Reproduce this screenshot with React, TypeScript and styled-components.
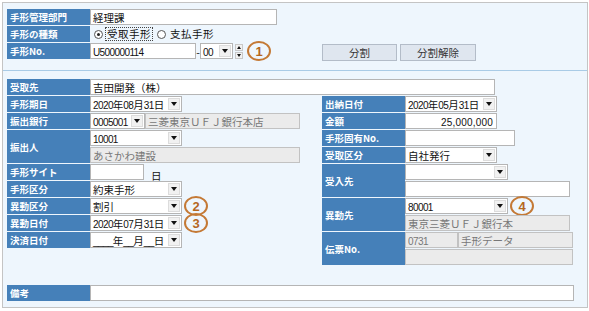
import styled, { createGlobalStyle } from "styled-components";

const GlobalStyle = createGlobalStyle`
    body {
        margin: 0;
        background: #ffffff;
        font-family: "Noto Sans CJK JP", sans-serif;
    }
`;

const Panel = styled.div`
    box-sizing: border-box;
    width: 586px;
    margin: 2px;
    border: 1px solid #c4c4c4;
    background: #eef6fd;
`;

const TopSection = styled.div`
    box-sizing: border-box;
    height: 68px;
    padding: 6px 4px 0;
    border-bottom: 1px solid #a9cbe6;
    display: flex;
`;

const FormBlock = styled.div<{ $w: number }>`
    width: ${(p) => p.$w}px;
    flex: none;
    display: flex;
    flex-direction: column;
    gap: 1px;
`;

const ButtonGroup = styled.div`
    display: flex;
    gap: 3px;
    padding-top: 35px;
`;

const Button = styled.div<{ $w: number }>`
    box-sizing: border-box;
    width: ${(p) => p.$w}px;
    height: 17px;
    border: 1px solid #b3bcc8;
    background: #dfe6ef;
    color: #333;
    font-size: 10.5px;
    display: flex;
    align-items: center;
    justify-content: center;
`;

const LowerSection = styled.div`
    padding: 8px 4px 6px;
    display: flex;
    flex-direction: column;
    gap: 1px;
`;

const Columns = styled.div`
    display: flex;
`;

const Row = styled.div<{ $tall?: boolean; $mt?: number }>`
    display: flex;
    height: ${(p) => (p.$tall ? 33 : 16)}px;
    margin-top: ${(p) => p.$mt ?? 0}px;
`;

const Label = styled.div`
    box-sizing: border-box;
    width: 83px;
    flex: none;
    background: #4580b9;
    color: #ffffff;
    font-weight: bold;
    font-size: 9.5px;
    padding-left: 3px;
    display: flex;
    align-items: center;
    white-space: nowrap;
`;

const Values = styled.div`
    display: flex;
    flex-direction: column;
    gap: 1px;
`;

const Line = styled.div`
    display: flex;
    align-items: center;
    height: 16px;
`;

const TextBox = styled.div<{ $w: number; $ro?: boolean; $right?: boolean }>`
    box-sizing: border-box;
    width: ${(p) => p.$w}px;
    height: 16px;
    flex: none;
    border: 1px solid ${(p) => (p.$ro ? "#c2c2c2" : "#b5b5b5")};
    background: ${(p) => (p.$ro ? "#ebebeb" : "#ffffff")};
    color: ${(p) => (p.$ro ? "#777" : "#111")};
    font-size: 10.5px;
    padding: 0 3px 0 2px;
    display: flex;
    align-items: center;
    justify-content: ${(p) => (p.$right ? "flex-end" : "flex-start")};
    white-space: nowrap;
    overflow: hidden;
`;

const SelectBox = styled.div<{ $w: number }>`
    box-sizing: border-box;
    width: ${(p) => p.$w}px;
    height: 16px;
    flex: none;
    border: 1px solid #b5b5b5;
    background: #ffffff;
    color: #111;
    font-size: 10.5px;
    padding-left: 2px;
    display: flex;
    align-items: center;
    justify-content: space-between;
    white-space: nowrap;
`;

// narrow latin run inside field text (digits are condensed in the original UI font)
const Narrow = styled.span<{ $wide?: boolean }>`
    font-family: "Liberation Sans", sans-serif;
    font-size: 10px;
    letter-spacing: ${(p) => (p.$wide ? "0.2px" : "-0.6px")};
`;

const Arrow = styled.span`
    width: 12px;
    height: 12px;
    margin-right: 1px;
    background: #f1f1f1;
    border: 1px solid #dcdcdc;
    box-sizing: border-box;
    display: flex;
    align-items: center;
    justify-content: center;

    &::after {
        content: "";
        border-top: 4px solid #111;
        border-left: 3px solid transparent;
        border-right: 3px solid transparent;
    }
`;

const Spinner = styled.div`
    display: flex;
    flex-direction: column;
    gap: 1px;
    margin-left: 2px;
`;

const SpinHalf = styled.span<{ $up?: boolean }>`
    box-sizing: border-box;
    width: 8px;
    height: 7px;
    border: 1px solid #c8c8c8;
    background: #f2f2f2;
    display: flex;
    align-items: center;
    justify-content: center;

    &::after {
        content: "";
        border-left: 2.5px solid transparent;
        border-right: 2.5px solid transparent;
        ${(p) => (p.$up ? "border-bottom: 3px solid #111;" : "border-top: 3px solid #111;")}
    }
`;

const Dash = styled.span`
    font-size: 10.5px;
    width: 4px;
    text-align: center;
    color: #111;
`;

const Unit = styled.span`
    font-size: 10.5px;
    margin-left: 7px;
    margin-top: 6px;
    color: #111;
`;

const Badge = styled.span<{ $ml: number }>`
    box-sizing: border-box;
    width: 24px;
    height: 20px;
    flex: none;
    margin-left: ${(p) => p.$ml}px;
    border: 2px solid #c47935;
    border-radius: 50%;
    color: #b5671f;
    font-family: "Liberation Sans", sans-serif;
    font-weight: bold;
    font-size: 13px;
    display: flex;
    align-items: center;
    justify-content: center;
`;

const RadioGroup = styled.div`
    display: flex;
    align-items: center;
    padding-left: 4px;
    font-size: 10.5px;
    color: #111;
`;

const RadioDot = styled.span<{ $on?: boolean }>`
    box-sizing: border-box;
    width: 9px;
    height: 9px;
    border: 1px solid #555;
    border-radius: 50%;
    background: #fff;
    display: flex;
    align-items: center;
    justify-content: center;
    margin-right: 2px;

    &::after {
        content: "";
        width: 3px;
        height: 3px;
        border-radius: 50%;
        background: ${(p) => (p.$on ? "#222" : "transparent")};
    }
`;

const RadioText = styled.span<{ $focus?: boolean }>`
    padding: 0 1px;
    letter-spacing: 0.5px;
    margin-right: 4px;
    border: 1px dotted ${(p) => (p.$focus ? "#444" : "transparent")};
    line-height: 12px;
`;

function Txt({ value, wide }: { value: string; wide?: boolean }) {
    const parts = value.match(/[\x20-\x7e]+|[^\x20-\x7e]+/g) ?? [];
    return (
        <span>
            {parts.map((part, i) =>
                /^[\x20-\x7e]/.test(part) ? (
                    <Narrow key={i} $wide={wide}>{part}</Narrow>
                ) : (
                    <span key={i}>{part}</span>
                )
            )}
        </span>
    );
}

function Select({ w, value }: { w: number; value: string }) {
    return (
        <SelectBox $w={w}>
            <Txt value={value} />
            <Arrow />
        </SelectBox>
    );
}

interface FieldProps {
    w: number;
    value?: string;
    ro?: boolean;
    right?: boolean;
}

function Field({ w, value = "", ro, right }: FieldProps) {
    return (
        <TextBox $w={w} $ro={ro} $right={right}>
            <Txt value={value} wide={right} />
        </TextBox>
    );
}

export default function App() {
    return (
        <>
            <GlobalStyle />
            <Panel>
                <TopSection>
                    <FormBlock $w={315}>
                        <Row>
                            <Label>手形管理部門</Label>
                            <Field w={187} value="経理課" />
                        </Row>
                        <Row>
                            <Label>手形の種類</Label>
                            <RadioGroup>
                                <RadioDot $on />
                                <RadioText $focus>受取手形</RadioText>
                                <RadioDot />
                                <RadioText>支払手形</RadioText>
                            </RadioGroup>
                        </Row>
                        <Row>
                            <Label>手形No.</Label>
                            <Line>
                                <Field w={106} value="U500000114" />
                                <Dash>-</Dash>
                                <Select w={33} value="00" />
                                <Spinner>
                                    <SpinHalf $up />
                                    <SpinHalf />
                                </Spinner>
                                <Badge $ml={4}>1</Badge>
                            </Line>
                        </Row>
                    </FormBlock>
                    <ButtonGroup>
                        <Button $w={75}>分割</Button>
                        <Button $w={76}>分割解除</Button>
                    </ButtonGroup>
                </TopSection>

                <LowerSection>
                    <Row>
                        <Label>受取先</Label>
                        <Field w={405} value="吉田開発（株）" />
                    </Row>
                    <Columns>
                        <FormBlock $w={315}>
                            <Row>
                                <Label>手形期日</Label>
                                <Select w={92} value="2020年08月31日" />
                            </Row>
                            <Row>
                                <Label>振出銀行</Label>
                                <Line>
                                    <Select w={55} value="0005001" />
                                    <Field w={155} ro value="三菱東京ＵＦＪ銀行本店" />
                                </Line>
                            </Row>
                            <Row $tall>
                                <Label>振出人</Label>
                                <Values>
                                    <Select w={92} value="10001" />
                                    <Field w={210} ro value="あさかわ建設" />
                                </Values>
                            </Row>
                            <Row>
                                <Label>手形サイト</Label>
                                <Line>
                                    <Field w={54} />
                                    <Unit>日</Unit>
                                </Line>
                            </Row>
                            <Row>
                                <Label>手形区分</Label>
                                <Select w={92} value="約束手形" />
                            </Row>
                            <Row>
                                <Label>異動区分</Label>
                                <Line>
                                    <Select w={92} value="割引" />
                                    <Badge $ml={2}>2</Badge>
                                </Line>
                            </Row>
                            <Row>
                                <Label>異動日付</Label>
                                <Line>
                                    <Select w={92} value="2020年07月31日" />
                                    <Badge $ml={2}>3</Badge>
                                </Line>
                            </Row>
                            <Row>
                                <Label>決済日付</Label>
                                <Select w={92} value="____年__月__日" />
                            </Row>
                        </FormBlock>
                        <FormBlock $w={260}>
                            <Row>
                                <Label>出納日付</Label>
                                <Select w={92} value="2020年05月31日" />
                            </Row>
                            <Row>
                                <Label>金額</Label>
                                <Field w={92} right value="25,000,000" />
                            </Row>
                            <Row>
                                <Label>手形固有No.</Label>
                                <Field w={110} />
                            </Row>
                            <Row>
                                <Label>受取区分</Label>
                                <Select w={92} value="自社発行" />
                            </Row>
                            <Row $tall>
                                <Label>受入先</Label>
                                <Values>
                                    <Select w={103} value="" />
                                    <Field w={165} />
                                </Values>
                            </Row>
                            <Row $tall>
                                <Label>異動先</Label>
                                <Values>
                                    <Line>
                                        <Select w={103} value="80001" />
                                        <Badge $ml={2}>4</Badge>
                                    </Line>
                                    <Field w={165} ro value="東京三菱ＵＦＪ銀行本" />
                                </Values>
                            </Row>
                            <Row $tall>
                                <Label>伝票No.</Label>
                                <Values>
                                    <Line>
                                        <Field w={53} ro value="0731" />
                                        <Field w={115} ro value="手形データ" />
                                    </Line>
                                    <Field w={168} ro />
                                </Values>
                            </Row>
                        </FormBlock>
                    </Columns>
                    <Row $mt={19}>
                        <Label>備考</Label>
                        <Field w={484} />
                    </Row>
                </LowerSection>
            </Panel>
        </>
    );
}
